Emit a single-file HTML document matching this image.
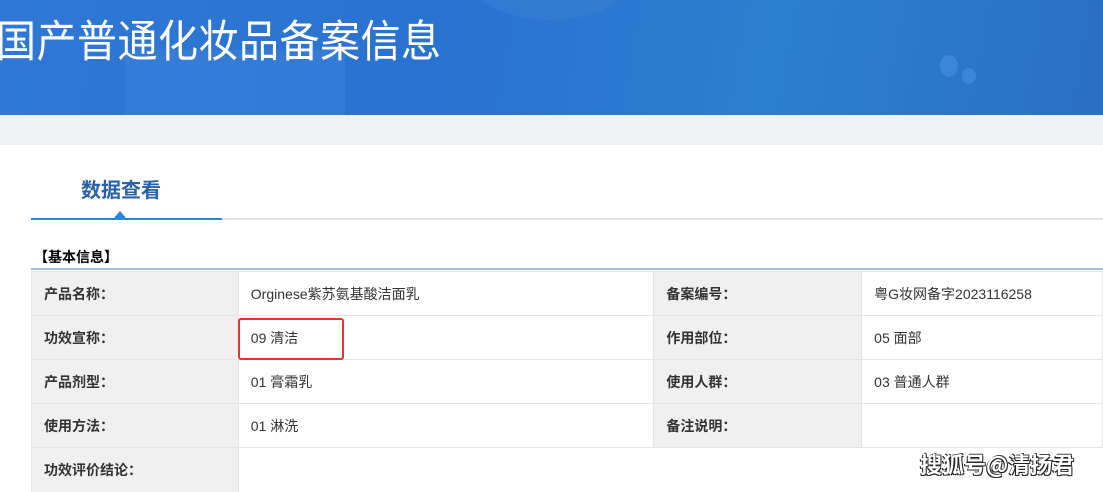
<!DOCTYPE html>
<html><head><meta charset="utf-8"><style>
*{margin:0;padding:0;box-sizing:border-box}
body{width:1103px;height:485px;overflow:hidden;background:#fff;font-family:"Liberation Sans","Noto Sans CJK SC",sans-serif;position:relative}
.hdr{position:absolute;left:0;top:0;width:1103px;height:115px;background:linear-gradient(100deg,#2f78d6 0%,#2a72cf 40%,#2b7fd0 70%,#2b6fc2 100%);overflow:hidden}
.hdr .b1{position:absolute;left:125px;top:50px;width:220px;height:70px;background:#3a80d8;opacity:.6}
.hdr .c1{position:absolute;left:470px;top:-60px;width:160px;height:80px;border-radius:50%;background:#3a7fd6;opacity:.5}
.hdr .c2{position:absolute;left:940px;top:55px;width:18px;height:22px;border-radius:50%;background:#3c86d8}
.hdr .c3{position:absolute;left:962px;top:68px;width:14px;height:16px;border-radius:50%;background:#3c86d8}
.hdr h1{position:absolute;left:-4px;top:6px;font-size:40px;font-weight:normal;color:#fff;letter-spacing:0.5px;font-family:"Noto Sans CJK SC",sans-serif;transform:scaleY(1.1);transform-origin:top left}
.band{position:absolute;left:0;top:115px;width:1103px;height:30px;background:#eff2f5}
.tab{position:absolute;left:81px;top:174px;font-size:20px;font-weight:bold;color:#2862a4;font-family:"Noto Sans CJK SC",sans-serif}
.line{position:absolute;left:31px;top:218px;width:1072px;height:2px;background:#e3e3e3}
.line2{position:absolute;left:31px;top:218px;width:191px;height:2px;background:#2a86d8}
.tri{position:absolute;left:114px;top:211px;width:0;height:0;border-left:6px solid transparent;border-right:6px solid transparent;border-bottom:7px solid #2a86d8}
.sec{position:absolute;left:34px;top:248px;font-size:14px;font-weight:bold;color:#000;font-family:"Noto Sans CJK SC",sans-serif;line-height:18px}
.bl{position:absolute;left:31px;top:268px;width:1072px;height:2px;background:#9dbde6}
table{position:absolute;left:31px;top:271px;border-collapse:collapse;font-size:14px;color:#333}
td{height:44px;border:1px solid #e4e4e4;padding-left:12px;font-family:"Liberation Sans","Noto Sans CJK SC",sans-serif}
td.l{background:#f0f0f0;font-weight:bold;width:207px}
td.v{width:416px}
td.l2{background:#f0f0f0;font-weight:bold;width:208px}
td.v2{width:241px}
.red{position:absolute;left:238px;top:318px;width:106px;height:42px;border:2px solid #e8322a;border-radius:3px}
.wm{position:absolute;left:920px;top:448px;font-size:22px;font-weight:bold;color:#fff;font-family:"Noto Sans CJK SC",sans-serif;text-shadow:1px 1px 0 #222,-1px 1px 0 #222,1px -1px 0 #444}
</style></head><body>
<div class="hdr"><div class="b1"></div><div class="c1"></div><div class="c2"></div><div class="c3"></div><h1>国产普通化妆品备案信息</h1></div>
<div class="band"></div>
<div class="tab">数据查看</div>
<div class="line"></div><div class="line2"></div><div class="tri"></div>
<div class="sec">【基本信息】</div>
<div class="bl"></div>
<table>
<tr><td class="l">产品名称：</td><td class="v">Orginese紫苏氨基酸洁面乳</td><td class="l2">备案编号：</td><td class="v2">粤G妆网备字2023116258</td></tr>
<tr><td class="l">功效宣称：</td><td class="v">09 清洁</td><td class="l2">作用部位：</td><td class="v2">05 面部</td></tr>
<tr><td class="l">产品剂型：</td><td class="v">01 膏霜乳</td><td class="l2">使用人群：</td><td class="v2">03 普通人群</td></tr>
<tr><td class="l">使用方法：</td><td class="v">01 淋洗</td><td class="l2">备注说明：</td><td class="v2"></td></tr>
<tr><td class="l" style="border-bottom:none">功效评价结论：</td><td class="v" colspan="3" style="border-right:none;border-bottom:none"></td></tr>
</table>
<div class="red"></div>
<div class="wm">搜狐号@清扬君</div>
</body></html>
